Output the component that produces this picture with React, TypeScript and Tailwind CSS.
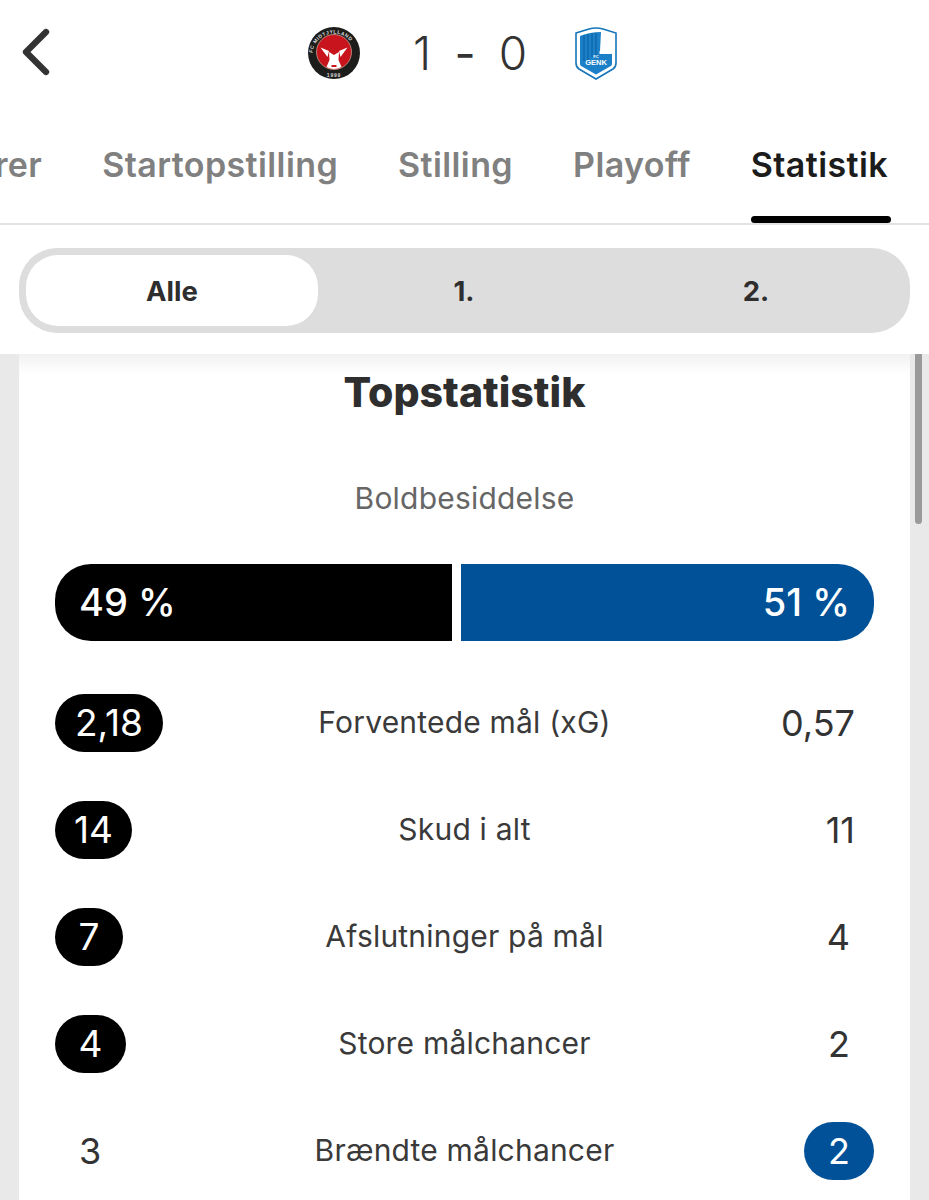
import { ChevronLeft } from 'lucide-react'

const rows = [
	{ label: 'Forventede mål (xG)', left: '2,18', right: '0,57', win: 'left', pill: 'w-[108px]', pad: 'pr-[19px]' },
	{ label: 'Skud i alt', left: '14', right: '11', win: 'left', pill: 'w-[77px]', pad: 'pr-[19px]' },
	{ label: 'Afslutninger på mål', left: '7', right: '4', win: 'left', pill: 'w-[68px]', pad: 'pr-[24px]' },
	{ label: 'Store målchancer', left: '4', right: '2', win: 'left', pill: 'w-[71px]', pad: 'pr-[24px]' },
	{ label: 'Brændte målchancer', left: '3', right: '2', win: 'right', pill: 'w-[70px]', pad: '' },
]

function MidtjyllandLogo() {
	return (
		<svg width="52" height="52" viewBox="0 0 52 52">
			<circle cx="26" cy="26" r="26" fill="#1d1d1b" />
			<circle cx="26" cy="25" r="17.5" fill="#c8141c" stroke="#e8c9b0" strokeWidth="0.6" />
			<path d="M12.5 20.5 L21 24 L19.5 30 Z M39.5 20.5 L31 24 L32.5 30 Z" fill="#fff" />
			<path d="M21 25 L26 28 L31 25 L30.5 33 L33.5 40 Q26 44 18.5 40 L21.5 33 Z" fill="#fff" />
			<path d="M23.5 38 h5 v2 h-5 Z" fill="#c8141c" />
			<text x="26" y="50" textAnchor="middle" fontSize="5" fontWeight="700" letterSpacing="0.8" fill="#ddd" fontFamily="'Liberation Sans', sans-serif">1999</text>
			<path id="mid-arc" d="M4.5 28 A21 21 0 0 1 47.5 28" fill="none" />
			<text fontSize="5" fontWeight="700" fill="#ddd" fontFamily="'Liberation Sans', sans-serif" letterSpacing="0.5">
				<textPath href="#mid-arc" startOffset="3%">FC MIDTJYLLAND</textPath>
			</text>
		</svg>
	)
}

function GenkLogo() {
	return (
		<svg width="42" height="53" viewBox="0 0 42 53">
			<path d="M1 6 L14 2 Q21 0 28 2 L41 6 L41 36 Q41 40 38 42 L21 52 L4 42 Q1 40 1 36 Z" fill="#fff" stroke="#1475bb" strokeWidth="1.6" />
			<path d="M5 9 Q15 5 26 5 L25 24 L37 24 L37 37 Q37 38.5 35 39.5 L21 47.5 L7 39.5 Q5 38.5 5 37 Z" fill="#1c80c8" />
			<path d="M9 8 V34 M13 7 V34 M17 6 V30 M21 6 V30" stroke="#0f65a8" strokeWidth="1.3" />
			<path d="M24.5 24 L37 24 L37 27 L24.5 27 Z" fill="#fff" />
			<text x="21" y="31" textAnchor="middle" fontSize="4" fontWeight="700" fill="#fff" fontFamily="'Liberation Sans', sans-serif">FC</text>
			<text x="21" y="38" textAnchor="middle" fontSize="7.5" fontWeight="700" fill="#fff" fontFamily="'Liberation Sans', sans-serif">GENK</text>
		</svg>
	)
}

function StatRow({ label, left, right, win, pill, pad }: { label: string; left: string; right: string; win: string; pill: string; pad: string }) {
	return (
		<div className="flex h-[107px] items-center justify-between">
			<div className="flex w-[200px] justify-start">
				{win === 'left' ? (
					<span className={`flex h-[58px] items-center justify-center rounded-full bg-black text-[37px] text-white ${pill}`}>{left}</span>
				) : (
					<span className="pl-[24px] text-[36px] text-[#333]">{left}</span>
				)}
			</div>
			<span className="text-[30px] tracking-[0.2px] text-[#3a3a3a]">{label}</span>
			<div className="flex w-[200px] justify-end">
				{win === 'right' ? (
					<span className={`flex h-[58px] items-center justify-center rounded-full bg-[#005197] text-[36px] text-white ${pill}`}>{right}</span>
				) : (
					<span className={`text-[36px] text-[#333] ${pad}`}>{right}</span>
				)}
			</div>
		</div>
	)
}

export default function App() {
	return (
		<div className="relative h-[1200px] w-[929px] overflow-hidden bg-[#e9e9e9] font-['Inter',sans-serif]">
			<div className="bg-white">
				<header className="relative flex h-[112px] items-center pb-[6px] pl-[308px]">
					<ChevronLeft className="absolute -left-[4px] top-[12px]" size={80} strokeWidth={1.9} color="#333" />
					<MidtjyllandLogo />
					<span className="ml-[40px] w-[44px] text-center text-[46px] font-light text-[#333]">1</span>
					<span className="w-[42px] text-center text-[46px] font-normal text-[#333]">-</span>
					<span className="w-[54px] text-center text-[46px] font-light text-[#333]">0</span>
					<div className="ml-[35px]">
						<GenkLogo />
					</div>
				</header>

				<nav className="relative flex h-[113px] items-start justify-end gap-[60px] overflow-hidden border-b-2 border-[#e2e2e2] pr-[41px] pt-[27px] text-[34px] font-semibold tracking-[0.4px] whitespace-nowrap text-[#808080]">
					<span>Kommentarer</span>
					<span>Startopstilling</span>
					<span>Stilling</span>
					<span>Playoff</span>
					<span className="relative text-[#1c1c1c]">
						Statistik
						<span className="absolute -right-[3px] bottom-[-33px] left-0 h-[7px] rounded-full bg-black" />
					</span>
				</nav>

				<div className="h-[129px] px-[19px] pt-[23px]">
					<div className="flex h-[85px] items-center rounded-[38px] bg-[#dddddd] p-[7px] text-[27.5px] font-bold text-[#2e2e2e]">
						<span className="flex h-full w-[292px] items-center justify-center rounded-[32px] bg-white pt-[3px]">Alle</span>
						<span className="flex h-full w-[292px] items-center justify-center pt-[3px]">1.</span>
						<span className="flex h-full w-[292px] items-center justify-center pt-[3px]">2.</span>
					</div>
				</div>
			</div>

			<main className="relative mx-[19px] h-[846px] rounded-t-[24px] bg-white px-[36px]">
				<div className="absolute inset-x-0 top-0 h-[20px] bg-gradient-to-b from-[#f1f1f1] to-white" />
				<h1 className="relative pt-[14px] text-center text-[41px] leading-[48px] font-extrabold text-[#2e2e2e]">Topstatistik</h1>
				<p className="mt-[64px] text-center text-[30px] leading-[36px] tracking-[0.2px] text-[#666]">Boldbesiddelse</p>
				<div className="mt-[48px] flex h-[77px] gap-[9px] text-[38px] font-medium text-white">
					<div className="flex w-[397px] items-center rounded-l-[36px] bg-black pl-[24px]">49 %</div>
					<div className="flex flex-1 items-center justify-end rounded-r-[36px] bg-[#005197] pr-[24px]">51 %</div>
				</div>
				<div className="mt-[28px]">
					{rows.map((row) => (
						<StatRow key={row.label} {...row} />
					))}
				</div>
			</main>

			<div className="absolute left-[915px] top-[354px] h-[170px] w-[7px] rounded-b-full bg-[#9a9a9a]" />
		</div>
	)
}
